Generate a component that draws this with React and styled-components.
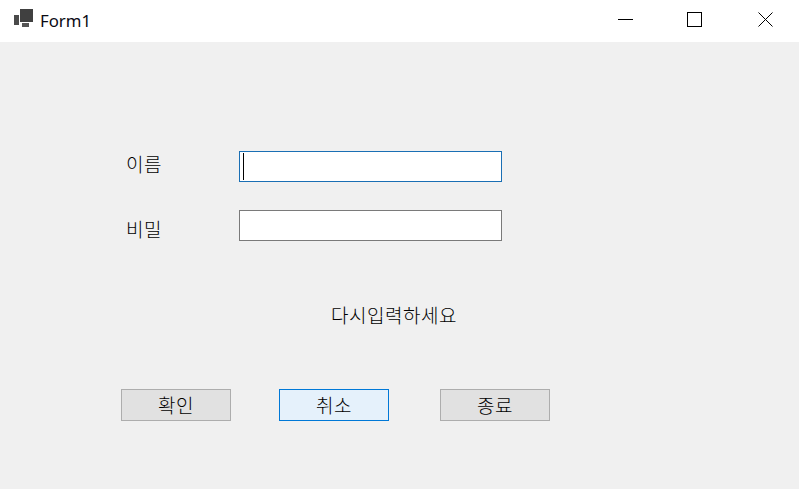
import React from "react";
import styled, { createGlobalStyle } from "styled-components";

const GlobalStyle = createGlobalStyle`
  html, body {
    margin: 0;
    padding: 0;
    background: #f0f0f0;
  }

  * {
    box-sizing: border-box;
  }
`;

const Window = styled.div`
  width: 799px;
  height: 489px;
  overflow: hidden;
  display: flex;
  flex-direction: column;
  font-family: "Noto Sans CJK KR", "Noto Sans", sans-serif;
  font-weight: 300;
  color: #000;
  background: #f0f0f0;
`;

const TitleBar = styled.div`
  height: 42px;
  flex-shrink: 0;
  display: flex;
  align-items: center;
  padding-left: 14px;
  background: #fff;
`;

const AppIcon = styled.svg`
  width: 19px;
  height: 18px;
  margin-top: -6px;
  margin-right: 7px;
`;

const Title = styled.span`
  font-family: "Noto Sans", sans-serif;
  font-weight: 400;
  font-size: 16.8px;
  line-height: 42px;
  color: #0a0a14;
  flex-grow: 1;
`;

const WindowButton = styled.button`
  width: 70px;
  height: 42px;
  padding: 0 0 0 ${({ $inset }) => $inset || 29}px;
  border: 0;
  background: transparent;
  display: flex;
  align-items: center;
  justify-content: flex-start;

  svg {
    width: 15px;
    height: 15px;
    margin-top: -3px;
  }
`;

const Body = styled.div`
  flex-grow: 1;
  display: flex;
  flex-direction: column;
  padding: 109px 0 0 121px;
`;

const FieldRow = styled.div`
  height: 31px;
  display: flex;
  align-items: center;
  margin-bottom: 28px;
`;

const Label = styled.label`
  width: 118px;
  padding-left: 5px;
  font-size: 19px;
  letter-spacing: 0.5px;
  line-height: 26px;
  margin-top: ${({ $shift }) => $shift || 0}px;
`;

const TextBox = styled.div`
  width: 263px;
  height: 31px;
  padding: 1px 0 1px 3px;
  display: flex;
  align-items: center;
  background: #fff;
  border: 1px solid ${({ $focused }) => ($focused ? "#1a6fb4" : "#7a7a7a")};
`;

const Caret = styled.span`
  width: 1px;
  height: 27px;
  flex-shrink: 0;
  background: #000;
`;

const Input = styled.input`
  flex-grow: 1;
  min-width: 0;
  height: 100%;
  padding: 0;
  border: 0;
  outline: 0;
  background: transparent;
`;

const Message = styled.div`
  margin: 33px 0 0 210px;
  height: 26px;
  font-size: 19px;
  letter-spacing: 0.5px;
  line-height: 26px;
  white-space: nowrap;
`;

const ButtonRow = styled.div`
  display: flex;
  margin-top: 61px;
`;

const Button = styled.button`
  width: 110px;
  height: 32px;
  margin-right: ${({ $gap }) => $gap || 0}px;
  padding: 0;
  font-family: inherit;
  font-weight: 300;
  font-size: 19px;
  letter-spacing: 0.5px;
  line-height: 26px;
  color: #000;
  background: ${({ $hover }) => ($hover ? "#e5f1fb" : "#e1e1e1")};
  border: 1px solid ${({ $hover }) => ($hover ? "#0078d7" : "#adadad")};
`;

const App = () => {
  return (
    <Window>
      <GlobalStyle />
      <TitleBar>
        <AppIcon viewBox="0 0 19 18">
          <rect x="6" y="0" width="13" height="13" fill="#404040" />
          <rect x="0" y="6" width="5" height="10" fill="#4a4a4a" />
          <rect x="8" y="14" width="7" height="4" fill="#555" />
        </AppIcon>
        <Title>Form1</Title>
        <WindowButton aria-label="minimize">
          <svg viewBox="0 0 15 15">
            <path d="M0 7.5H15" stroke="#000" fill="none" />
          </svg>
        </WindowButton>
        <WindowButton aria-label="maximize" $inset={28}>
          <svg viewBox="0 0 15 15">
            <rect x="0.5" y="0.5" width="14" height="14" stroke="#000" fill="none" />
          </svg>
        </WindowButton>
        <WindowButton aria-label="close">
          <svg viewBox="0 0 15 15">
            <path d="M0.5 0.5L14.5 14.5M14.5 0.5L0.5 14.5" stroke="#000" fill="none" />
          </svg>
        </WindowButton>
      </TitleBar>
      <Body>
        <FieldRow>
          <Label $shift={-5}>이름</Label>
          <TextBox $focused>
            <Caret />
            <Input />
          </TextBox>
        </FieldRow>
        <FieldRow>
          <Label $shift={7}>비밀</Label>
          <TextBox>
            <Input />
          </TextBox>
        </FieldRow>
        <Message>다시입력하세요</Message>
        <ButtonRow>
          <Button $gap={48}>확인</Button>
          <Button $gap={51} $hover>취소</Button>
          <Button>종료</Button>
        </ButtonRow>
      </Body>
    </Window>
  );
};

export default App;
